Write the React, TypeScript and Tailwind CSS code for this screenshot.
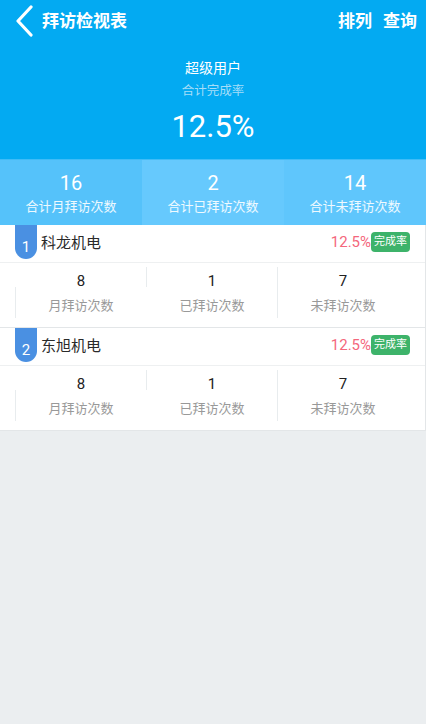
import { ReactNode } from 'react'

interface Shop {
    name: string
    rate: string
    month: number
    done: number
    todo: number
}

const shops: Shop[] = [
    { name: '科龙机电', rate: '12.5%', month: 8, done: 1, todo: 7 },
    { name: '东旭机电', rate: '12.5%', month: 8, done: 1, todo: 7 },
]

const font = { fontFamily: "Roboto, 'Noto Sans CJK SC', sans-serif" }

function TotalCell({ value, label, tone }: { value: number; label: string; tone: string }) {
    return (
        <div className={`flex-1 flex flex-col items-center justify-center h-[65px] ${tone}`}>
            <div className="text-[20px] leading-[24px] mt-[2px] text-white">{value}</div>
            <div className="text-[13px] leading-[18px] mt-[3px] text-white/90">{label}</div>
        </div>
    )
}

// divider placement mirrors the odd look of the original list
function StatCell({ value, label, divider }: { value: number; label: string; divider: ReactNode }) {
    return (
        <div className="flex-1 flex">
            {divider}
            <div className="flex-1 flex flex-col items-center pt-[8px]">
                <div className="text-[15px] leading-[20px] text-[#222]">{value}</div>
                <div className="text-[13px] leading-[18px] mt-[6px] text-[#999]">{label}</div>
            </div>
        </div>
    )
}

function ShopCard({ shop, index }: { shop: Shop; index: number }) {
    return (
        <div className="bg-white border-b border-r border-[#e3e6e8]">
            <div className="flex items-start h-[38px] border-b border-[#eef0f1]">
                <div className="ml-[15px] w-[22px] h-[34px] bg-[#4a90e2] rounded-b-full flex items-end justify-center pb-[3px]">
                    <span className="text-white text-[15px] leading-[18px]">{index}</span>
                </div>
                <div className="ml-[4px] mt-[8px] text-[15px] leading-[20px] text-[#2a2a2a]">{shop.name}</div>
                <div className="ml-auto mr-[15px] mt-[7px] flex items-center">
                    <span className="text-[15px] leading-[20px] text-[#f4677c]">{shop.rate}</span>
                    <span className="h-[20px] px-[3px] rounded-[4px] bg-[#3db36a] text-white text-[11px] leading-[20px]">
                        完成率
                    </span>
                </div>
            </div>
            <div className="flex h-[64px] pl-[15px] pr-[17px]">
                <StatCell
                    value={shop.month}
                    label="月拜访次数"
                    divider={<div className="w-px h-[31px] self-end mb-[9px] bg-[#e8ecee]" />}
                />
                <StatCell
                    value={shop.done}
                    label="已拜访次数"
                    divider={<div className="w-px h-[20px] mt-[4px] bg-[#e8ecee]" />}
                />
                <StatCell
                    value={shop.todo}
                    label="未拜访次数"
                    divider={<div className="w-px h-[51px] mt-[4px] bg-[#e8ecee]" />}
                />
            </div>
        </div>
    )
}

export default function App() {
    return (
        <div className="w-[426px] h-[724px] bg-[#ebeef0] overflow-hidden" style={font}>
            <div className="bg-[#03aaf2]">
                <div className="flex items-center h-[42px] pl-[14px] pr-[9px] pt-[2px]">
                    <svg width="20" height="32" viewBox="0 0 20 32" className="shrink-0 -mt-[2px]">
                        <path d="M17 2 L4 16 L17 30" stroke="white" strokeWidth="3.2" fill="none" strokeLinecap="round" strokeLinejoin="round" />
                    </svg>
                    <span className="ml-[8px] text-white text-[17px] font-bold">拜访检视表</span>
                    <span className="ml-auto text-white text-[17px] font-bold">排列</span>
                    <span className="ml-[11px] text-white text-[17px] font-bold">查询</span>
                </div>
                <div className="flex flex-col items-center pt-[16px] pb-[14px]">
                    <div className="text-white text-[14px] leading-[20px]">超级用户</div>
                    <div className="mt-[4px] text-[#a5ddf8] text-[12.5px] leading-[18px]">合计完成率</div>
                    <div className="mt-[9px] text-white text-[31px] leading-[36px]">12.5%</div>
                </div>
            </div>
            <div className="flex border-t border-[#3fbcf7]">
                <TotalCell value={16} label="合计月拜访次数" tone="bg-[#55c2fa]" />
                <TotalCell value={2} label="合计已拜访次数" tone="bg-[#66c9fd]" />
                <TotalCell value={14} label="合计未拜访次数" tone="bg-[#5fc6fc]" />
            </div>
            {shops.map((shop, i) => (
                <ShopCard key={shop.name} shop={shop} index={i + 1} />
            ))}
        </div>
    )
}
